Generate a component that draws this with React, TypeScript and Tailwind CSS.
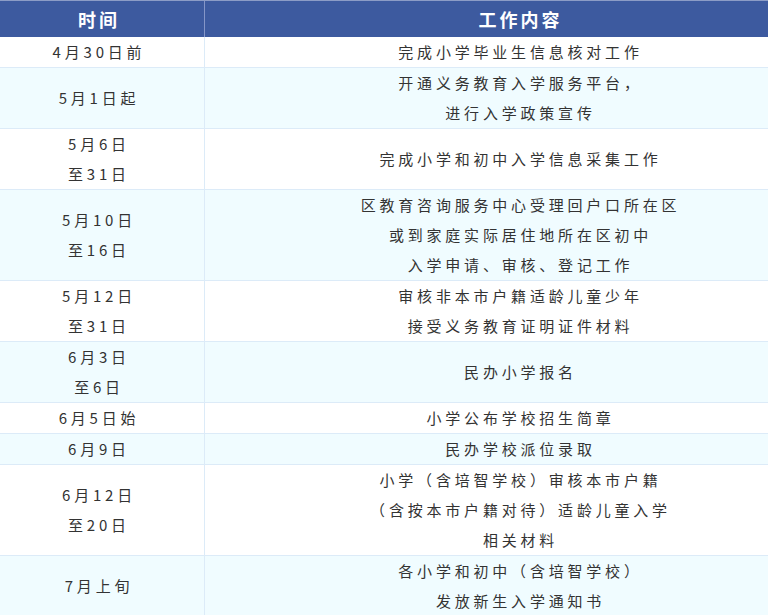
const rows: { time: string[]; work: string[] }[] = [
  { time: ["4月30日前"], work: ["完成小学毕业生信息核对工作"] },
  { time: ["5月1日起"], work: ["开通义务教育入学服务平台，", "进行入学政策宣传"] },
  { time: ["5月6日", "至31日"], work: ["完成小学和初中入学信息采集工作"] },
  {
    time: ["5月10日", "至16日"],
    work: ["区教育咨询服务中心受理回户口所在区", "或到家庭实际居住地所在区初中", "入学申请、审核、登记工作"],
  },
  { time: ["5月12日", "至31日"], work: ["审核非本市户籍适龄儿童少年", "接受义务教育证明证件材料"] },
  { time: ["6月3日", "至6日"], work: ["民办小学报名"] },
  { time: ["6月5日始"], work: ["小学公布学校招生简章"] },
  { time: ["6月9日"], work: ["民办学校派位录取"] },
  {
    time: ["6月12日", "至20日"],
    work: ["小学（含培智学校）审核本市户籍", "（含按本市户籍对待）适龄儿童入学", "相关材料"],
  },
  { time: ["7月上旬"], work: ["各小学和初中（含培智学校）", "发放新生入学通知书"] },
];

export default function App() {
  return (
    <div
      className="w-[769px] h-[615px] overflow-hidden bg-white text-[#333333]"
      style={{ fontFamily: '"Noto Sans CJK SC", "Noto Sans", sans-serif' }}
    >
      <div className="w-[768px]">
        <div className="grid grid-cols-[205px_1fr] h-[37px] bg-[#3d5a9f] border-t border-[#8c9cc6] text-white font-bold text-[18px] tracking-[3px]">
          <div className="flex items-center justify-center pr-[6px] border-r border-[#8596c8]">时间</div>
          <div className="flex items-center justify-center pl-[68px]">工作内容</div>
        </div>
        {rows.map((row, i) => (
          <div
            key={i}
            className={
              "grid grid-cols-[205px_1fr] border-b border-[#dcebf8] text-[15px] leading-[30px] tracking-[3.8px] " +
              (i % 2 === 0 ? "bg-white" : "bg-[#f0fcff]")
            }
          >
            <div className="flex flex-col items-center justify-center pr-[6px] border-r border-[#dcebf8]">
              {row.time.map((t) => (
                <div key={t}>{t}</div>
              ))}
            </div>
            <div className="flex flex-col items-center justify-center pl-[68px]">
              {row.work.map((w) => (
                <div key={w}>{w}</div>
              ))}
            </div>
          </div>
        ))}
      </div>
    </div>
  );
}
